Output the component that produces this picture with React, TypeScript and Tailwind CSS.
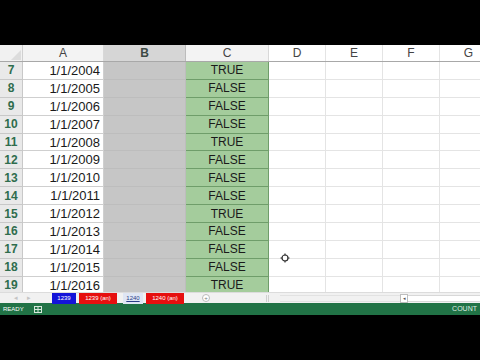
import React from 'react';

const rows = [
  { n: 7, date: '1/1/2004', v: 'TRUE' },
  { n: 8, date: '1/1/2005', v: 'FALSE' },
  { n: 9, date: '1/1/2006', v: 'FALSE' },
  { n: 10, date: '1/1/2007', v: 'FALSE' },
  { n: 11, date: '1/1/2008', v: 'TRUE' },
  { n: 12, date: '1/1/2009', v: 'FALSE' },
  { n: 13, date: '1/1/2010', v: 'FALSE' },
  { n: 14, date: '1/1/2011', v: 'FALSE' },
  { n: 15, date: '1/1/2012', v: 'TRUE' },
  { n: 16, date: '1/1/2013', v: 'FALSE' },
  { n: 17, date: '1/1/2014', v: 'FALSE' },
  { n: 18, date: '1/1/2015', v: 'FALSE' },
  { n: 19, date: '1/1/2016', v: 'TRUE' },
];

function Cursor() {
  return (
    <svg width="10" height="10" viewBox="0 0 10 10" className="absolute left-[280px] top-[208px]">
      <circle cx="5" cy="5" r="3" fill="white" stroke="#333" strokeWidth="1.2" />
      <path d="M5 0.5v2M5 7.5v2M0.5 5h2M7.5 5h2" stroke="#333" strokeWidth="1.2" />
    </svg>
  );
}

export default function App() {
  return (
    <div className="w-[480px] h-[360px] bg-black flex flex-col overflow-hidden" style={{ fontFamily: '"Liberation Sans", Arial, sans-serif' }}>
      <div className="h-[45px] shrink-0" />

      {/* sheet */}
      <div className="relative h-[247px] shrink-0 bg-white overflow-hidden">
        {/* column headers */}
        <div className="flex h-[17px] text-[12px] text-[#444] border-b border-[#a8a8a8]">
          <div className="w-[23px] shrink-0 bg-[#f1f1f1] border-r border-[#d0d0d0] relative">
            <svg width="10" height="10" className="absolute right-[1px] bottom-[1px]">
              <path d="M10 0L10 10L0 10Z" fill="#dcdcdc" />
            </svg>
          </div>
          <div className="w-[81px] shrink-0 bg-[#f3f3f3] border-r border-[#d8d8d8] flex items-center justify-center">A</div>
          <div className="w-[82px] shrink-0 bg-[#d6d6d6] border-r border-[#bcbcbc] flex items-center justify-center font-bold text-[#3d4a44]">B</div>
          <div className="w-[83px] shrink-0 bg-[#f3f3f3] border-r border-[#d8d8d8] flex items-center justify-center">C</div>
          <div className="w-[57px] shrink-0 bg-white border-r border-[#e4e4e4] flex items-center justify-center">D</div>
          <div className="w-[57px] shrink-0 bg-white border-r border-[#e4e4e4] flex items-center justify-center">E</div>
          <div className="w-[57px] shrink-0 bg-white border-r border-[#e4e4e4] flex items-center justify-center">F</div>
          <div className="w-[57px] shrink-0 bg-white flex items-center justify-center">G</div>
        </div>

        {rows.map((r) => (
          <div key={r.n} className="flex h-[17.9px] text-[13px] leading-none">
            <div className="w-[23px] shrink-0 bg-[#e9e9e9] border-r border-b border-[#c8c8c8] flex items-center justify-center font-bold text-[12px] text-[#2f6d4d]">
              {r.n}
            </div>
            <div className="w-[81px] shrink-0 border-r border-b border-[#cfcfcf] flex items-center justify-end pr-[3px] text-[#1a1a1a]">
              {r.date}
            </div>
            <div className="w-[82px] shrink-0 bg-[#c6c6c6] border-r border-b border-[#bdbdbd]" />
            <div className="w-[83px] shrink-0 bg-[#a4cc9c] border-r border-b border-[#6f9d6a] flex items-center justify-center text-[12px] text-[#1a1a1a]">
              {r.v}
            </div>
            <div className="w-[57px] shrink-0 border-r border-b border-[#e4e4e4]" />
            <div className="w-[57px] shrink-0 border-r border-b border-[#e4e4e4]" />
            <div className="w-[57px] shrink-0 border-r border-b border-[#e4e4e4]" />
            <div className="w-[57px] shrink-0 border-b border-[#e4e4e4]" />
          </div>
        ))}
        <Cursor />
      </div>

      {/* sheet tabs */}
      <div className="h-[11px] shrink-0 bg-[#f1f1f1] flex items-center text-[6px] relative border-t border-[#dcdcdc]">
        <span className="absolute left-[14px] text-[#c4c4c4] text-[7px]">◂</span>
        <span className="absolute left-[27px] text-[#c4c4c4] text-[7px]">▸</span>
        <div className="absolute left-[52px] top-0 w-[24px] h-[11px] bg-[#1414d8] text-white flex items-center justify-center">1239</div>
        <div className="absolute left-[79px] top-0 w-[38px] h-[11px] bg-[#e60f0f] text-white flex items-center justify-center">1239 (an)</div>
        <div className="absolute left-[123px] top-0 w-[20px] h-[11px] bg-[#dfe6f4] text-[#2a3d86] underline flex items-center justify-center">1240</div>
        <div className="absolute left-[146px] top-0 w-[38px] h-[11px] bg-[#e60f0f] text-white flex items-center justify-center">1240 (an)</div>
        <div className="absolute left-[202px] top-[1px] w-[8px] h-[8px] rounded-full border border-[#bbbbbb] bg-white flex items-center justify-center text-[6px] text-[#777] leading-none">+</div>
        <div className="absolute left-[266px] top-[2px] w-[3px] h-[7px] border-x border-[#cfcfcf]" />
        <div className="absolute left-[280px] top-[2px] w-[120px] h-[7px] border-y border-[#e2e2e2]" />
        <div className="absolute left-[400px] top-[1px] w-[8px] h-[9px] border border-[#bdbdbd] bg-white flex items-center justify-center text-[5px] text-[#555]">◂</div>
        <div className="absolute left-[408px] top-[2px] w-[72px] h-[7px] border-y border-[#d8d8d8] bg-white" />
      </div>

      {/* status bar */}
      <div className="h-[12px] shrink-0 bg-[#217346] flex items-center text-white text-[6px] px-[3px]">
        <span>READY</span>
        <svg width="8" height="7" viewBox="0 0 8 7" className="ml-[10px]">
          <rect x="0.5" y="0.5" width="7" height="6" fill="none" stroke="#d8e8dc" strokeWidth="1" />
          <path d="M0.5 3.5h7M4 0.5v6" stroke="#d8e8dc" strokeWidth="1" />
        </svg>
        <span className="ml-auto text-[7px] text-[#dfeee4]">COUNT</span>
      </div>

      <div className="flex-1" />
    </div>
  );
}
